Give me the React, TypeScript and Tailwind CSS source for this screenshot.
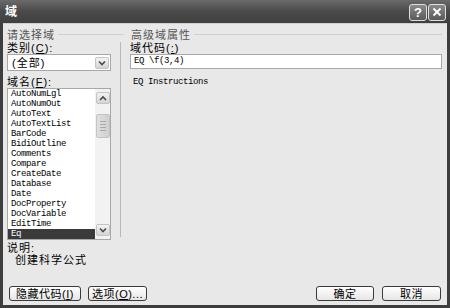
import React from 'react';

const cjk = { fontFamily: '"Liberation Sans", "Noto Sans CJK SC", sans-serif' };
const mono = { fontFamily: '"Liberation Mono", "DejaVu Sans Mono", monospace' };

const fields = [
  'AutoNumLgl',
  'AutoNumOut',
  'AutoText',
  'AutoTextList',
  'BarCode',
  'BidiOutline',
  'Comments',
  'Compare',
  'CreateDate',
  'Database',
  'Date',
  'DocProperty',
  'DocVariable',
  'EditTime',
  'Eq',
];

function Chevron({ up }: { up?: boolean }) {
  return (
    <svg width="8" height="6" viewBox="0 0 8 6">
      <path
        d={up ? 'M1 5 L4 2 L7 5' : 'M1 1.5 L4 4.5 L7 1.5'}
        fill="none"
        stroke="#4a4a4a"
        strokeWidth="1.6"
      />
    </svg>
  );
}

function ArrowBox({ up }: { up?: boolean }) {
  return (
    <div className="flex h-[12px] w-[14px] items-center justify-center rounded-[2px] border border-[#c4c4c4] bg-gradient-to-b from-[#f4f4f4] to-[#d4d4d4]">
      <Chevron up={up} />
    </div>
  );
}

function Header({ text }: { text: string }) {
  return (
    <div className="flex h-[12px] items-center gap-[3px]">
      <span className="text-[11px] leading-[12px] tracking-[1px] text-[#555]">{text}</span>
      <div className="h-[2px] flex-1 border-t border-[#d0d0d0] border-b-white" />
    </div>
  );
}

function Btn({ children, w }: { children: React.ReactNode; w: string }) {
  return (
    <div
      className={`${w} flex h-[15px] items-center justify-center rounded-[3px] border border-[#3a3a3a] bg-gradient-to-b from-white to-[#e6e6e6] text-[11px] leading-[12px] tracking-[0.5px] text-black`}
    >
      {children}
    </div>
  );
}

export default function App() {
  return (
    <div className="flex h-[308px] w-[450px] flex-col overflow-hidden bg-[#3e3e3e]" style={cjk}>
      {/* 标题栏 */}
      <div className="flex h-[23px] items-center justify-between bg-gradient-to-b from-[#6a6a6a] via-[#4a4a4a] to-[#404040] pl-[5px] pr-[4px]">
        <span className="text-[12px] font-bold text-white">域</span>
        <div className="flex gap-[1px] pt-[1px]">
          <div className="flex h-[17px] w-[18px] items-center justify-center rounded-[3px] border border-[#e0e0e0] bg-gradient-to-b from-[#8a8a8a] to-[#5a5a5a] text-[13px] font-bold leading-none text-white">
            ?
          </div>
          <div className="flex h-[17px] w-[18px] items-center justify-center rounded-[3px] border border-[#e0e0e0] bg-gradient-to-b from-[#8a8a8a] to-[#5a5a5a]">
            <svg width="10" height="10" viewBox="0 0 10 10">
              <path d="M1.5 1.5 L8.5 8.5 M8.5 1.5 L1.5 8.5" stroke="white" strokeWidth="1.8" />
            </svg>
          </div>
        </div>
      </div>

      {/* 主体 */}
      <div className="mx-[3px] mb-[3px] flex flex-1 flex-col border-t border-[#cfcfcf] bg-[#e8e8e8] pl-[4px] pr-[5px] pt-[5px]">
        <div className="flex">
          <div className="w-[117px]">
            <Header text="请选择域" />
          </div>
          <div className="ml-[7px] flex-1">
            <Header text="高级域属性" />
          </div>
        </div>

        <div className="mt-[1px] flex">
          {/* 左列 */}
          <div className="flex w-[104px] flex-col">
            <div className="h-[12px] text-[11px] leading-[12px] tracking-[1px] text-black">
              类别(<span className="underline">C</span>):
            </div>
            <div className="flex h-[17px] items-center justify-between border border-[#a8a8a8] bg-white pl-[4px] pr-[1px]">
              <span className="text-[11px] leading-[12px] tracking-[1px]">(全部)</span>
              <ArrowBox />
            </div>
            <div className="mt-[5px] h-[12px] text-[11px] leading-[12px] tracking-[1px] text-black">
              域名(<span className="underline">F</span>):
            </div>
            <div className="flex h-[152px] border border-[#a8a8a8] bg-white">
              <div className="flex flex-1 flex-col">
                {fields.map((f) => (
                  <div
                    key={f}
                    className={`h-[10px] pl-[3px] text-[9px] leading-[10px] tracking-[-0.4px] ${
                      f === 'Eq' ? 'bg-[#3a3a3a] text-white' : 'text-black'
                    }`}
                    style={mono}
                  >
                    {f}
                  </div>
                ))}
              </div>
              <div className="flex w-[15px] flex-col items-center justify-between bg-[#f2f2f2] py-[3px]">
                <div className="flex flex-col items-center gap-[10px]">
                  <ArrowBox up />
                  <div className="flex h-[24px] w-[14px] flex-col items-center justify-center gap-[2px] rounded-[2px] border border-[#c4c4c4] bg-gradient-to-r from-[#e0e0e0] to-[#d0d0d0]">
                    <div className="h-px w-[6px] bg-[#aaa]" />
                    <div className="h-px w-[6px] bg-[#aaa]" />
                    <div className="h-px w-[6px] bg-[#aaa]" />
                    <div className="h-px w-[6px] bg-[#aaa]" />
                  </div>
                </div>
                <ArrowBox />
              </div>
            </div>
          </div>

          {/* 分隔线 */}
          <div className="mb-[3px] ml-[9px] w-[2px] self-stretch border-l border-[#b8b8b8] border-r-white" />

          {/* 右列 */}
          <div className="ml-[8px] flex flex-1 flex-col">
            <div className="h-[12px] text-[11px] leading-[12px] tracking-[1px] text-black">
              域代码(<span className="underline">:</span>)
            </div>
            <div className="flex h-[15px] items-center border border-[#a8a8a8] bg-white pl-[3px]">
              <span className="text-[9px] tracking-[-0.4px]" style={mono}>
                EQ \f(3,4)
              </span>
            </div>
            <div className="mt-[8px] pl-[3px] text-[9px] leading-[10px] tracking-[-0.4px]" style={mono}>
              EQ Instructions
            </div>
          </div>
        </div>

        {/* 说明 */}
        <div className="mt-[2px] h-[12px] text-[11px] leading-[12px] tracking-[1px] text-black">说明:</div>
        <div className="h-[12px] pl-[8px] text-[11px] leading-[12px] tracking-[1px] text-black">创建科学公式</div>

        {/* 按钮 */}
        <div className="mt-auto mb-[4px] flex items-center pl-[2px] pr-[1px]">
          <Btn w="w-[72px]">
            隐藏代码(<span className="underline">I</span>)
          </Btn>
          <div className="ml-[7px]">
            <Btn w="w-[59px]">
              选项(<span className="underline">O</span>)...
            </Btn>
          </div>
          <div className="ml-auto flex gap-[8px]">
            <Btn w="w-[58px]">确定</Btn>
            <Btn w="w-[59px]">取消</Btn>
          </div>
        </div>
      </div>
    </div>
  );
}
